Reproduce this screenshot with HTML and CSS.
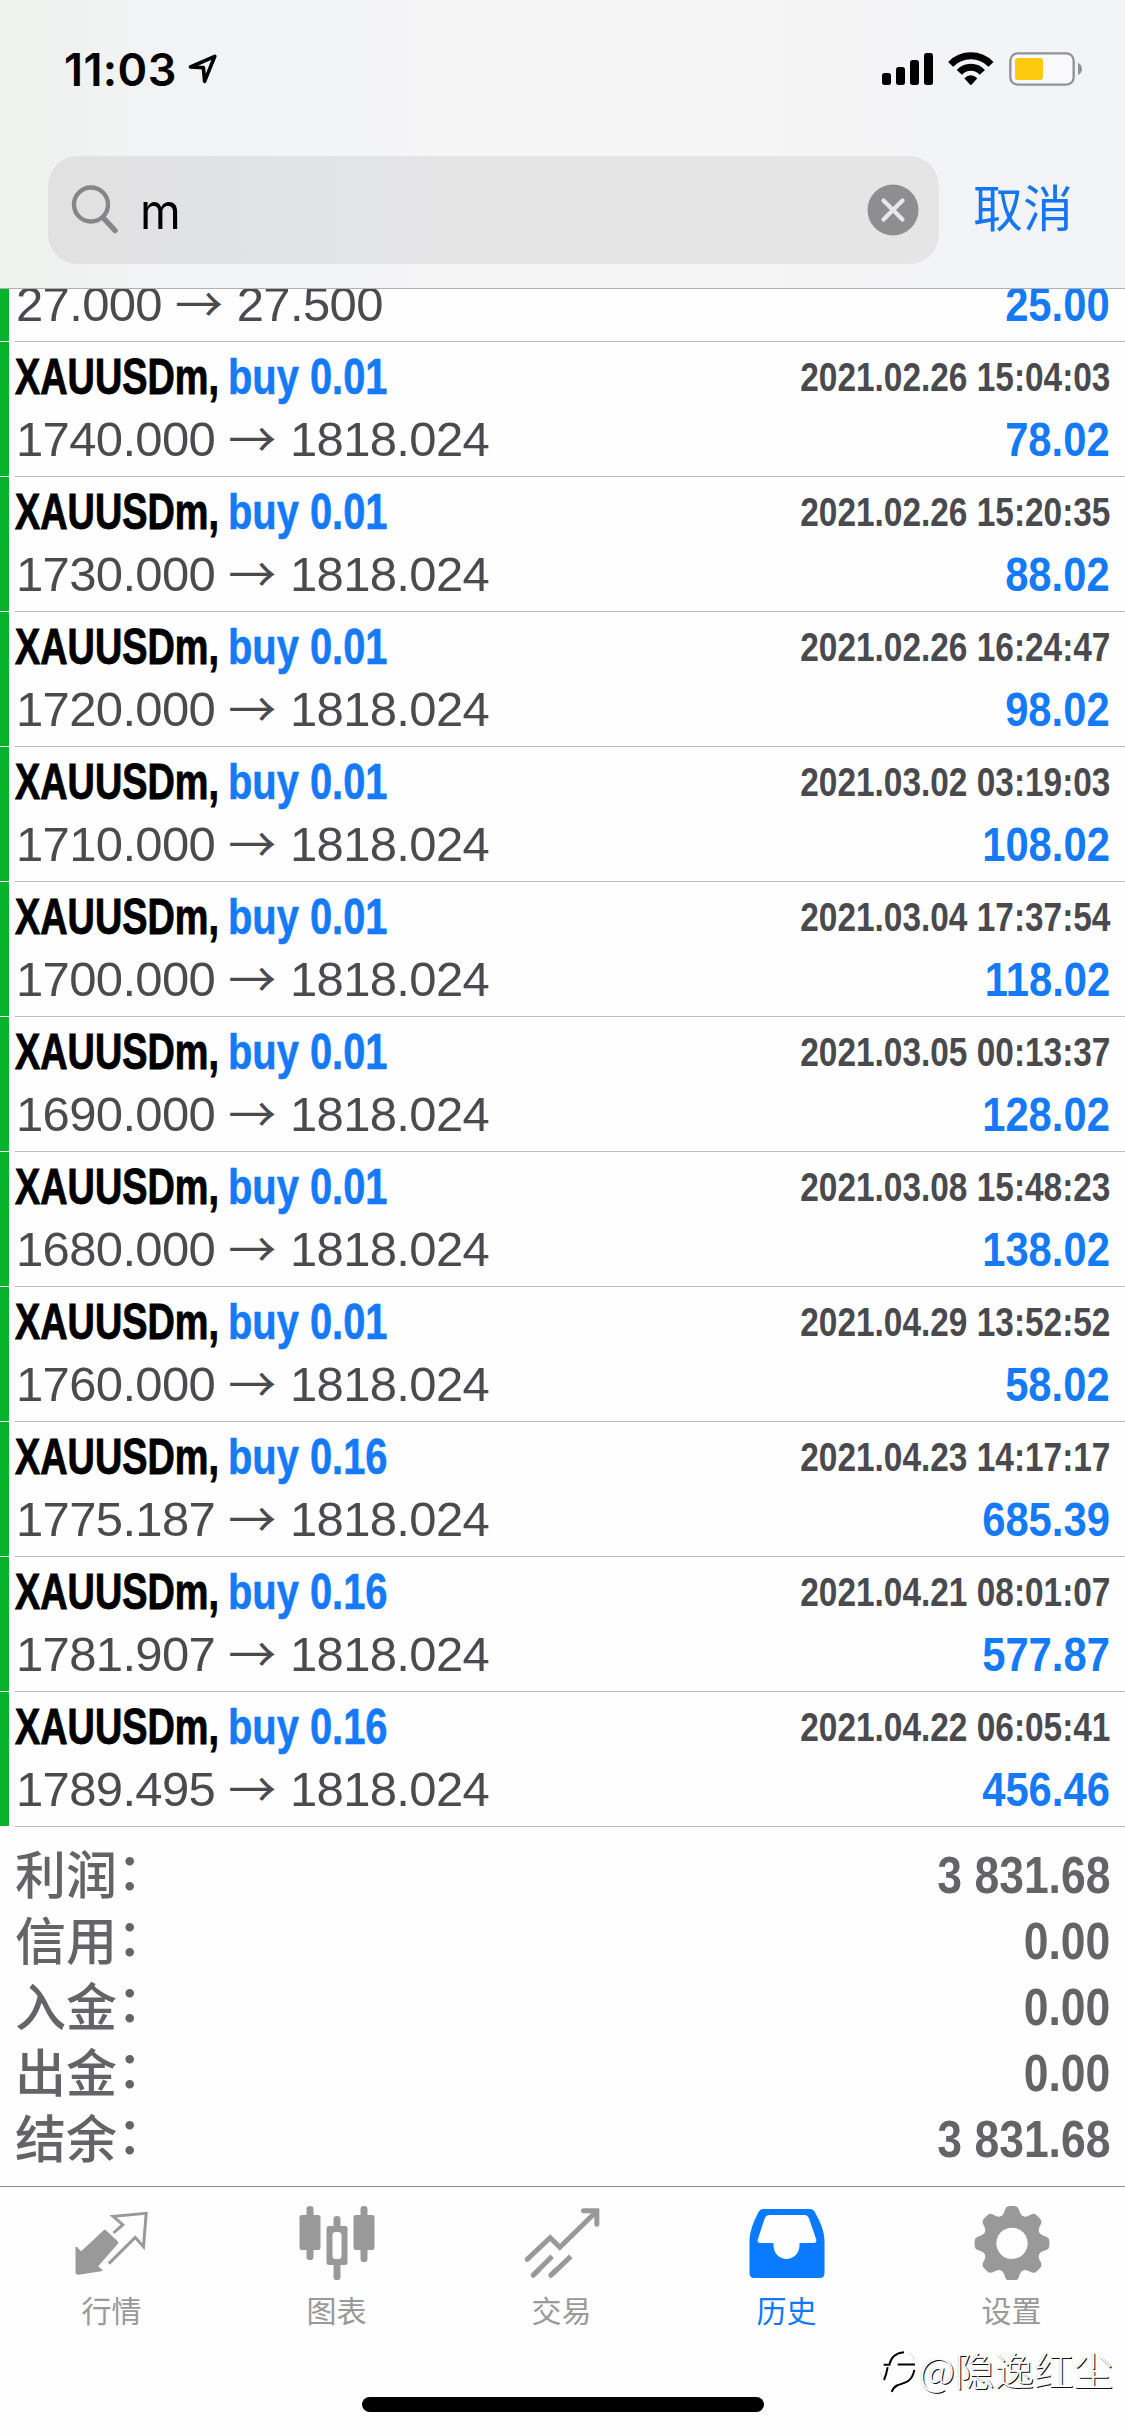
FILE: index.html
```
<!DOCTYPE html>
<html lang="zh-CN">
<head>
<meta charset="utf-8">
<title>历史</title>
<link rel="stylesheet" href="styles.css">
</head>
<body>
<div class="screen">
  <header class="header">
    <div class="status">
      <span class="time">11:03</span>
      <svg class="location" viewBox="186 52 33 34"><path d="M190.500 67 214.800 56.300 204.600 81.400 203.400 67.600Z"/></svg>
      <svg class="indicators" viewBox="0 0 690 210">
        <rect x="36" y="99" width="27" height="36" rx="8"/><rect x="78" y="81" width="27" height="54" rx="8"/><rect x="120" y="60" width="27" height="75" rx="8"/><rect x="162" y="39" width="27" height="96" rx="8"/>
        <path class="wifi" d="M242 73A84 84 0 0 1 363 73M268 97A46 46 0 0 1 337 97"/>
        <path d="M283 115Q302 97 322 115L306 133Q302 137 299 133Z"/>
        <rect class="battery" x="421" y="40" width="190" height="94" rx="22"/>
        <rect class="charge" x="435" y="54" width="84" height="66" rx="9"/>
        <path class="nub" d="M624 68Q636 74 636 87Q636 99 624 105Z"/>
      </svg>
    </div>
    <div class="search-row">
      <div class="search">
        <svg class="magnifier" viewBox="0 0 50 54"><circle cx="21" cy="21.500" r="17"/><path d="M33 34.500 45 47.500"/></svg>
        <span class="query">m</span>
        <svg class="clear" viewBox="0 0 52 52"><circle cx="26" cy="26" r="25.500"/><path d="M16.500 16.500 35.500 35.500M35.500 16.500 16.500 35.500"/></svg>
      </div>
      <span class="cancel">取消</span>
    </div>
  </header>

  <main class="list">
    <div class="row partial"><div class="cell"><div class="line"><span class="price">27.000 <i>→</i> 27.500</span><span class="profit">25.00</span></div></div></div>
    <div class="row"><div class="cell"><div class="line top"><span class="symbol">XAUUSDm,</span><span class="deal">buy 0.01</span><span class="date">2021.02.26 15:04:03</span></div><div class="line"><span class="price">1740.000 <i>→</i> 1818.024</span><span class="profit">78.02</span></div></div></div>
    <div class="row"><div class="cell"><div class="line top"><span class="symbol">XAUUSDm,</span><span class="deal">buy 0.01</span><span class="date">2021.02.26 15:20:35</span></div><div class="line"><span class="price">1730.000 <i>→</i> 1818.024</span><span class="profit">88.02</span></div></div></div>
    <div class="row"><div class="cell"><div class="line top"><span class="symbol">XAUUSDm,</span><span class="deal">buy 0.01</span><span class="date">2021.02.26 16:24:47</span></div><div class="line"><span class="price">1720.000 <i>→</i> 1818.024</span><span class="profit">98.02</span></div></div></div>
    <div class="row"><div class="cell"><div class="line top"><span class="symbol">XAUUSDm,</span><span class="deal">buy 0.01</span><span class="date">2021.03.02 03:19:03</span></div><div class="line"><span class="price">1710.000 <i>→</i> 1818.024</span><span class="profit">108.02</span></div></div></div>
    <div class="row"><div class="cell"><div class="line top"><span class="symbol">XAUUSDm,</span><span class="deal">buy 0.01</span><span class="date">2021.03.04 17:37:54</span></div><div class="line"><span class="price">1700.000 <i>→</i> 1818.024</span><span class="profit">118.02</span></div></div></div>
    <div class="row"><div class="cell"><div class="line top"><span class="symbol">XAUUSDm,</span><span class="deal">buy 0.01</span><span class="date">2021.03.05 00:13:37</span></div><div class="line"><span class="price">1690.000 <i>→</i> 1818.024</span><span class="profit">128.02</span></div></div></div>
    <div class="row"><div class="cell"><div class="line top"><span class="symbol">XAUUSDm,</span><span class="deal">buy 0.01</span><span class="date">2021.03.08 15:48:23</span></div><div class="line"><span class="price">1680.000 <i>→</i> 1818.024</span><span class="profit">138.02</span></div></div></div>
    <div class="row"><div class="cell"><div class="line top"><span class="symbol">XAUUSDm,</span><span class="deal">buy 0.01</span><span class="date">2021.04.29 13:52:52</span></div><div class="line"><span class="price">1760.000 <i>→</i> 1818.024</span><span class="profit">58.02</span></div></div></div>
    <div class="row"><div class="cell"><div class="line top"><span class="symbol">XAUUSDm,</span><span class="deal">buy 0.16</span><span class="date">2021.04.23 14:17:17</span></div><div class="line"><span class="price">1775.187 <i>→</i> 1818.024</span><span class="profit">685.39</span></div></div></div>
    <div class="row"><div class="cell"><div class="line top"><span class="symbol">XAUUSDm,</span><span class="deal">buy 0.16</span><span class="date">2021.04.21 08:01:07</span></div><div class="line"><span class="price">1781.907 <i>→</i> 1818.024</span><span class="profit">577.87</span></div></div></div>
    <div class="row"><div class="cell"><div class="line top"><span class="symbol">XAUUSDm,</span><span class="deal">buy 0.16</span><span class="date">2021.04.22 06:05:41</span></div><div class="line"><span class="price">1789.495 <i>→</i> 1818.024</span><span class="profit">456.46</span></div></div></div>
  </main>

  <section class="summary">
    <div class="total"><span class="label">利润<i>：</i></span><span class="amount">3 831.68</span></div>
    <div class="total"><span class="label">信用<i>：</i></span><span class="amount">0.00</span></div>
    <div class="total"><span class="label">入金<i>：</i></span><span class="amount">0.00</span></div>
    <div class="total"><span class="label">出金<i>：</i></span><span class="amount">0.00</span></div>
    <div class="total"><span class="label">结余<i>：</i></span><span class="amount">3 831.68</span></div>
  </section>

  <nav class="tabs">
    <div class="tab">
      <svg viewBox="37.500 30 240 240"><path d="M45 172Q47 168 50 172L62 184 128 122Q133 117 138 122L171 153Q176 158 171 163L113 229 126 240Q127 243 122 244L54 254Q45 254 45 246Z"/><path class="outline" d="M159 129 187 104 158 79 257 70 249 170 224 142 145 221"/></svg>
      <span>行情</span>
    </div>
    <div class="tab">
      <svg viewBox="712.500 30 240 240"><rect x="738" y="48" width="21" height="162" rx="10"/><rect x="717" y="75" width="63" height="105" rx="7"/><rect x="819" y="78" width="21" height="192" rx="10"/><path fill-rule="evenodd" d="M805 108H854Q861 108 861 115V218Q861 225 854 225H805Q798 225 798 218V115Q798 108 805 108Z"/><rect class="hole" x="816" y="126" width="27" height="81" rx="10"/><rect x="900" y="48" width="21" height="168" rx="10"/><rect x="879" y="75" width="63" height="105" rx="7"/></svg>
      <span>图表</span>
    </div>
    <div class="tab">
      <svg viewBox="67.500 30 240 240"><path class="trend" d="M80 208 149 143 178 172 286 66M249 62H289V103"/><path class="trend" d="M98 256 115 239M151 256 168 239"/><path class="trend cut" d="M98 256 155 199M151 256 211 199"/></svg>
      <span>交易</span>
    </div>
    <div class="tab active">
      <svg viewBox="742.500 30 240 240"><path fill-rule="evenodd" d="M788 57H928Q938 57 943 66Q971 115 972 150V250Q972 264 958 264H761Q747 264 747 250V150Q748 115 774 66Q779 57 788 57ZM808 75Q798 75 793 84L772 148Q769 159 779 159H819V168C820 192 839 207 858 207C877 207 896 192 897 168V159H940Q950 159 947 148L925 84Q921 75 912 75Z"/></svg>
      <span>历史</span>
    </div>
    <div class="tab">
      <svg viewBox="307.500 30 240 240">
        <defs><path id="tooth" d="M386 82Q399 77 403 61Q406 48 418 48H431Q443 48 446 61Q450 77 463 82V100H386Z"/></defs>
        <circle cx="424.500" cy="160" r="87"/>
        <use href="#tooth"/><use href="#tooth" transform="rotate(45 424.500 160)"/><use href="#tooth" transform="rotate(90 424.500 160)"/><use href="#tooth" transform="rotate(135 424.500 160)"/><use href="#tooth" transform="rotate(180 424.500 160)"/><use href="#tooth" transform="rotate(225 424.500 160)"/><use href="#tooth" transform="rotate(270 424.500 160)"/><use href="#tooth" transform="rotate(315 424.500 160)"/>
        <circle class="hole" cx="424.500" cy="160" r="47"/>
      </svg>
      <span>设置</span>
    </div>
  </nav>
  <div class="home-bar"></div>
  <div class="watermark">
    <svg viewBox="28 494 114 134"><path class="thick" d="M42 541H59Q66 506 103 503"/><path class="thick" d="M84 540H136"/><path class="thick" d="M54 548Q51 567 43 587"/><path class="thick" d="M134 556C126 597 99 595 82 603Q72 608 66 622"/><path class="fine" d="M43 587Q33 577 33 564M118 506Q133 513 133 526"/></svg>
    <span>@隐逸红尘</span>
  </div>
</div>
</body>
</html>
```
FILE: styles.css
```
* { box-sizing: border-box; }
body { margin: 0; background: #fefefe; }
svg { display: block; flex: none; }
i { font-style: normal; }
.screen {
  position: relative;
  display: flex;
  flex-direction: column;
  width: 1125px;
  height: 2436px;
  overflow: hidden;
  font-family: "Liberation Sans", "Noto Sans CJK SC", sans-serif;
}

.header {
  height: 289px;
  border-bottom: 1px solid #b0b0b2;
  background: linear-gradient(90deg, #eef1ee 0, #f1f2f2 110px, #f3f4f8 300px, #f5f5f6 430px, #f5f5f5 750px, #f2f3f7 1125px);
}
.status { display: flex; height: 156px; padding-left: 64px; }
.time {
  width: 122px;
  padding-top: 43px;
  font: 600 45px/54px Inter, sans-serif;
  letter-spacing: .4px;
  white-space: nowrap;
}
.location { width: 33px; height: 34px; margin-top: 52px; fill: none; stroke: #000; stroke-width: 3.6; stroke-linejoin: round; }
.indicators { width: 230px; height: 70px; margin: 40px 25px 0 auto; }
.wifi { fill: none; stroke: #000; stroke-width: 21; }
.battery { fill: #f9f9fb; stroke: #909396; stroke-width: 7; }
.charge { fill: #fdca0f; }
.nub { fill: #909396; }

.search-row { display: flex; align-items: center; height: 108px; padding-left: 48px; }
.search {
  display: flex;
  align-items: center;
  width: 891px;
  height: 108px;
  padding: 0 20px 0 22px;
  border-radius: 30px;
  background: linear-gradient(90deg, #e1e1e1, #e2e3e7 270px, #e5e5e6 400px);
}
.magnifier { width: 50px; height: 54px; fill: none; stroke: #868688; stroke-width: 4.4; stroke-linecap: round; }
.magnifier path { stroke-width: 5.5; }
.query { margin-left: 20px; padding-top: 2px; font: 400 50px/60px Inter, sans-serif; transform: scaleX(.93); transform-origin: 0 50%; }
.clear { width: 52px; height: 52px; margin-left: auto; fill: #8e8e90; stroke: #e9e9ea; stroke-width: 4.2; stroke-linecap: round; }
.clear circle { stroke: none; }
.cancel { margin-left: 34px; padding-bottom: 10px; color: #1576f2; font: 400 50px/60px "Noto Sans CJK SC", sans-serif; }

.row { display: flex; height: 135px; }
.row::before { content: ""; width: 9px; height: calc(100% - 1px); background: #07b32b; }
.cell { flex: 1; margin-left: 6px; padding: 4px 15px 0 0; border-bottom: 1px solid #bcbcbe; }
.partial { height: 53px; overflow: hidden; }
.partial .cell { display: flex; flex-direction: column; justify-content: flex-end; padding: 0 15px 6px 0; }
.line { display: flex; justify-content: space-between; flex: none; height: 62px; line-height: 62px; white-space: nowrap; }
.symbol, .deal { flex: none; font-size: 50px; font-weight: 700; transform-origin: 0 50%; }
.symbol { width: 213px; color: #000; transform: scaleX(.757); -webkit-text-stroke: .9px; }
.deal { width: 200px; color: #147af8; transform: scaleX(.797); -webkit-text-stroke: .6px; }
.date { margin-left: auto; color: #4a4a4e; font-size: 40px; font-weight: 700; transform: scaleX(.835); transform-origin: 100% 50%; }
.price { padding-left: 1px; color: #4b4b4f; font-size: 49px; letter-spacing: -.65px; }
.price i { display: inline-block; height: 62px; margin-right: 1.5px; font-family: "Noto Sans CJK SC", sans-serif; font-size: 48px; vertical-align: top; transform: translateY(-3px); }
.profit { color: #147af8; font-size: 49px; font-weight: 700; transform: scaleX(.852); transform-origin: 100% 50%; }

.summary { flex: none; height: 359px; padding: 15px 15px 0; color: #646466; }
.total { display: flex; justify-content: space-between; height: 66px; line-height: 66px; }
.label { height: 66px; margin-top: -3px; font: 500 51px/66px "Noto Sans CJK SC", sans-serif; }
.label i { display: inline-block; transform: translate(0, -4px); }
.amount { font-size: 52px; font-weight: 700; transform: scaleX(.855); transform-origin: 100% 50%; }

.tabs { display: flex; flex: none; height: 250px; border-top: 1px solid #8e8e8e; }
.tab { display: flex; flex-direction: column; align-items: center; width: 225px; padding-top: 13px; color: #999; font: 400 30px/44px "Noto Sans CJK SC", sans-serif; }
.tab svg { width: 80px; height: 80px; margin-bottom: 7px; fill: currentColor; }
.tab span { margin-right: 2px; }
.tab .hole { fill: #fefefe; }
.tab .outline { fill: none; stroke: currentColor; stroke-width: 9; }
.tab .trend { fill: none; stroke: currentColor; stroke-width: 15; stroke-linecap: round; stroke-linejoin: miter; }
.tab .cut { stroke-linecap: butt; }
.tab.active { color: #0a7aff; }

.home-bar { position: absolute; left: 362px; top: 2397px; width: 402px; height: 15px; border-radius: 8px; background: #000; }
.watermark { position: absolute; left: 879px; top: 2339px; display: flex; align-items: center; height: 60px; }
.watermark svg { width: 38px; height: 45px; margin-top: 5px; fill: none; stroke: #000; }
.watermark .thick { stroke-width: 6; }
.watermark .fine { stroke-width: 1; stroke: #999; }
.watermark span { margin-left: 2px; color: #fff; font: 300 39.500px/58px "Noto Sans CJK SC", sans-serif; text-shadow: 1px 1px .6px #111, -.5px -.5px .5px #ccc; white-space: nowrap; }
```
